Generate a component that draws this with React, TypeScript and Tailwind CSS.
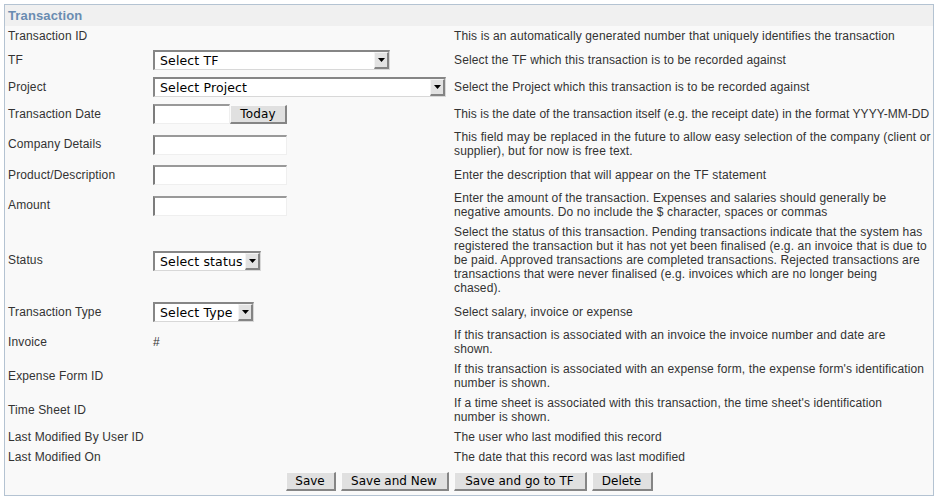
import React from 'react';

type Field = {
  label: string;
  control?: React.ReactNode;
  plain?: string;
  desc: string[];
  tight?: boolean;
};

const font = "font-['Liberation_Sans',Arial,sans-serif]";
const sans = `${font} tracking-[0.13px]`;
const deja = "font-['DejaVu_Sans',Verdana,sans-serif]";

function Arrow() {
  return (
    <div className="flex w-[15px] h-full items-center justify-center bg-[#e2e2e2] border-t border-l border-t-[#f4f4f4] border-l-[#f4f4f4] border-b-2 border-r-2 border-b-[#848484] border-r-[#848484]">
      <svg width="7" height="4" viewBox="0 0 7 4">
        <path d="M0 0h7L3.5 4z" fill="#000" />
      </svg>
    </div>
  );
}

function Select({ text, className }: { text: string; className: string }) {
  return (
    <div
      className={`flex h-[20px] mt-[1px] bg-white border-t-2 border-l-2 border-t-[#868686] border-l-[#868686] border-r border-b border-r-[#d8d8d8] border-b-[#d8d8d8] ${className}`}
    >
      <span className={`flex-1 pl-[5px] text-[12.5px] leading-[17px] text-black whitespace-nowrap ${deja}`}>
        {text}
      </span>
      <Arrow />
    </div>
  );
}

function TextInput({ className = 'w-[134px]' }: { className?: string }) {
  return (
    <div
      className={`h-[20px] mt-[1px] bg-white border-t-2 border-l-2 border-t-[#999] border-l-[#7c7c7c] border-r border-b border-r-[#efefef] border-b-[#efefef] ${className}`}
    />
  );
}

function Button({ text, className = '' }: { text: string; className?: string }) {
  return (
    <button
      type="button"
      className={`h-[19px] bg-[#e0e0e0] border-t border-l border-t-[#fafafa] border-l-[#fafafa] border-b-2 border-r-2 border-b-[#858585] border-r-[#858585] text-[12px] leading-[15px] text-black whitespace-nowrap ${deja} ${className}`}
    >
      {text}
    </button>
  );
}

const fields: Field[] = [
  {
    label: 'Transaction ID',
    desc: ['This is an automatically generated number that uniquely identifies the transaction'],
  },
  {
    label: 'TF',
    control: <Select text="Select TF" className="w-[237px]" />,
    desc: ['Select the TF which this transaction is to be recorded against'],
  },
  {
    label: 'Project',
    control: <Select text="Select Project" className="w-[293px]" />,
    desc: ['Select the Project which this transaction is to be recorded against'],
  },
  {
    label: 'Transaction Date',
    control: (
      <div className="flex items-start">
        <TextInput className="w-[77px]" />
        <Button text="Today" className="mt-[2px] w-[57px]" />
      </div>
    ),
    desc: ['This is the date of the transaction itself (e.g. the receipt date) in the format YYYY-MM-DD'],
    tight: true,
  },
  {
    label: 'Company Details',
    control: <TextInput />,
    desc: [
      'This field may be replaced in the future to allow easy selection of the company (client or',
      'supplier), but for now is free text.',
    ],
  },
  {
    label: 'Product/Description',
    control: <TextInput />,
    desc: ['Enter the description that will appear on the TF statement'],
  },
  {
    label: 'Amount',
    control: <TextInput />,
    desc: [
      'Enter the amount of the transaction. Expenses and salaries should generally be',
      'negative amounts. Do no include the $ character, spaces or commas',
    ],
  },
  {
    label: 'Status',
    control: <Select text="Select status" className="w-[108px]" />,
    desc: [
      'Select the status of this transaction. Pending transactions indicate that the system has',
      'registered the transaction but it has not yet been finalised (e.g. an invoice that is due to',
      'be paid. Approved transactions are completed transactions. Rejected transactions are',
      'transactions that were never finalised (e.g. invoices which are no longer being',
      'chased).',
    ],
  },
  {
    label: 'Transaction Type',
    control: <Select text="Select Type" className="w-[101px]" />,
    desc: ['Select salary, invoice or expense'],
  },
  {
    label: 'Invoice',
    plain: '#',
    desc: ['If this transaction is associated with an invoice the invoice number and date are', 'shown.'],
  },
  {
    label: 'Expense Form ID',
    desc: [
      "If this transaction is associated with an expense form, the expense form's identification",
      'number is shown.',
    ],
  },
  {
    label: 'Time Sheet ID',
    desc: [
      "If a time sheet is associated with this transaction, the time sheet's identification",
      'number is shown.',
    ],
  },
  {
    label: 'Last Modified By User ID',
    desc: ['The user who last modified this record'],
  },
  {
    label: 'Last Modified On',
    desc: ['The date that this record was last modified'],
  },
];

export default function App() {
  return (
    <div className="w-[938px] h-[502px] bg-white pt-[4px] pl-[4px]">
      <div className="w-[930px] h-[492px] border border-[#b4c3d2] bg-[#f9f9f9] flex flex-col">
        <div
          className={`h-[21px] bg-[#f0f0f0] pl-[3px] text-[13px] leading-[21px] font-bold text-[#6a8cb1] ${sans}`}
        >
          Transaction
        </div>

        <div className="grid grid-cols-[148px_301px_1fr] items-center">
          {fields.map((f) => (
            <React.Fragment key={f.label}>
              <div className={`pl-[3px] py-[3px] text-[12px] leading-[14px] text-[#333] ${sans}`}>
                {f.label}
              </div>
              <div className={`py-[3px] text-[12px] leading-[14px] text-[#333] ${sans}`}>
                {f.control ? <div className="min-h-[21px] flex items-start">{f.control}</div> : f.plain}
              </div>
              <div
                className={`py-[3px] text-[12px] leading-[14px] text-[#333] whitespace-nowrap ${font} ${
                  f.tight ? 'tracking-[0.04px]' : 'tracking-[0.13px]'
                }`}
              >
                {f.desc.map((line) => (
                  <div key={line}>{line}</div>
                ))}
              </div>
            </React.Fragment>
          ))}
        </div>

        <div className="flex justify-center gap-[5px] pt-[5px]">
          <Button text="Save" className="w-[50px]" />
          <Button text="Save and New" className="w-[108px]" />
          <Button text="Save and go to TF" className="w-[133px]" />
          <Button text="Delete" className="w-[61px]" />
        </div>
      </div>
    </div>
  );
}
